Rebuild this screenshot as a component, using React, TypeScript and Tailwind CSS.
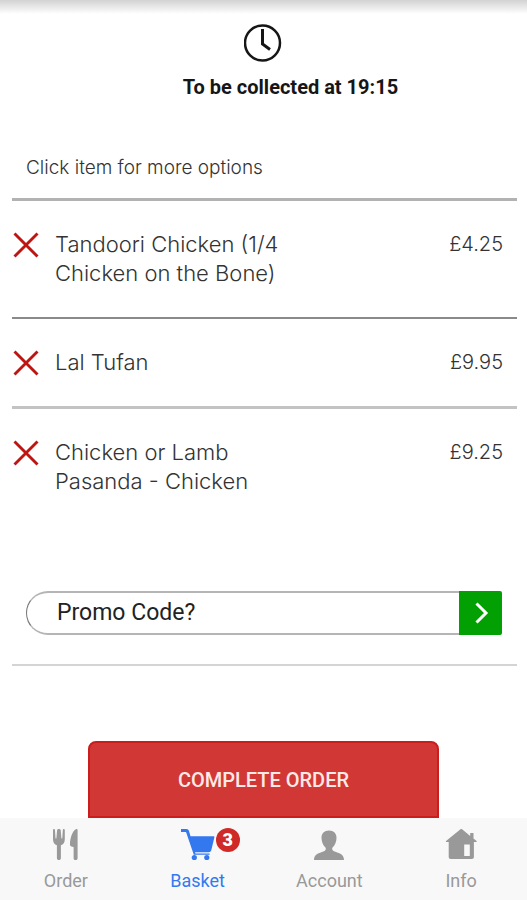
import type { ReactNode } from 'react';

const items = [
  { name: 'Tandoori Chicken (1/4 Chicken on the Bone)', price: '£4.25', divider: 'border-t-3 border-[#b2b2b2]' },
  { name: 'Lal Tufan', price: '£9.95', divider: 'border-t-2 border-[#8a8a8a]' },
  { name: 'Chicken or Lamb Pasanda - Chicken', price: '£9.25', divider: 'border-t-3 border-[#c3c3c3]' },
];

function ClockIcon() {
  return (
    <svg width="40" height="40" viewBox="0 0 40 40" fill="none" stroke="#161616" aria-hidden="true">
      <circle cx="18.500" cy="20" r="17.500" strokeWidth="2.500" />
      <path d="M18.500 6v15l7.500 5.500" strokeWidth="3" />
    </svg>
  );
}

function RemoveIcon() {
  return (
    <svg width="26" height="26" viewBox="0 0 26 26" fill="none" stroke="#bd1512" strokeWidth="2.9" aria-hidden="true">
      <path d="M1.500 1.500l23 23M24.500 1.500l-23 23" />
    </svg>
  );
}

function CutleryIcon() {
  return (
    <svg width="34" height="34" viewBox="0 0 34 34" fill="currentColor" aria-hidden="true">
      <path d="M4 2.200v9.100c0 3.500 1.500 5.200 3.900 6v12.600c0 1.400.9 2.200 2 2.200s2-.8 2-2.200V17.300c2.400-.8 3.900-2.500 3.900-6V2.200c0-1.500-1.900-1.500-2 0l-.5 7.800c-.1.700-.9.700-.9 0l-.7-7.800c-.2-1.500-3.400-1.500-3.600 0L7.400 10c-.1.700-.9.700-.9 0L6 2.200c-.1-1.500-2-1.500-2 0z" />
      <path d="M28.600 2.200v28c0 1.200-.9 1.900-2 1.900s-2-.7-2-1.900V18.900c-2.200 0-3.600-.6-3.600-2.400 0-5.300 1.800-12.900 5.900-15.200 1-.6 1.700-.1 1.700.9z" />
    </svg>
  );
}

function CartIcon() {
  return (
    <svg width="34" height="34" viewBox="0 0 34 34" fill="currentColor" aria-hidden="true">
      <path d="M0 1h5.300c1.600 0 2.300.7 2.700 2.100l1.500 5.200h23.300c.5 0 .7.400.6.900l-3 12.500c-.3 1.500-1.100 2.500-2.600 2.500H14l.4 1.200h14.200v1.300H12.800L5.200 4.500C5.100 4.100 4.900 4 4.500 4H0z" />
      <circle cx="13.300" cy="29.500" r="2.600" />
      <circle cx="25.800" cy="29.500" r="2.600" />
    </svg>
  );
}

function PersonIcon() {
  return (
    <svg width="34" height="34" viewBox="0 0 34 34" fill="currentColor" aria-hidden="true">
      <path d="M17 2.500c-4.700 0-7.800 3-7.500 7.800.1 3.500 1.500 7 3.700 8.900.6.600.8 1.400.5 2.300-.5 1.500-2.300 2-4.900 2.900C4.800 25.700 2 27.400 2 32h30c0-4.600-2.800-6.300-6.800-7.600-2.600-.9-4.400-1.400-4.900-2.900-.3-.9-.1-1.700.5-2.300 2.200-1.900 3.600-5.400 3.700-8.900.3-4.800-2.800-7.800-7.500-7.800z" />
    </svg>
  );
}

function HouseIcon() {
  return (
    <svg width="34" height="34" viewBox="0 0 34 34" fill="currentColor" aria-hidden="true">
      <path
        fillRule="evenodd"
        d="M16.500 1.300L2 13.100c-.3.300-.2.800.3.800h2.400v15c0 1.200.8 2 2 2h21.200c1.200 0 2-.8 2-2v-15h2.400c.5 0 .6-.5.3-.8l-3.100-2.500V5h-3.300v2.900l-8.100-6.600c-.6-.4-1.100-.4-1.600 0zM20.200 16.500h5.600V28h-5.600z"
      />
    </svg>
  );
}

function NavLink({ label, active, children }: { label: string; active?: boolean; children: ReactNode }) {
  return (
    <a
      href="#"
      aria-current={active ? 'page' : undefined}
      className={`flex flex-col items-center pt-2.5 text-lg leading-6 ${active ? 'text-[#3478f0]' : 'text-[#999]'}`}
    >
      <span className="relative">{children}</span>
      <span className="mt-[7px]">{label}</span>
    </a>
  );
}

function App() {
  return (
    <div className="flex min-h-screen flex-col bg-white font-['Roboto',sans-serif] text-black">
      <main className="flex flex-1 flex-col">
        {/* Collection time */}
        <header className="flex flex-col items-center bg-linear-to-b from-[#d2d2d2] to-white to-[14px] pt-[23px]">
          <ClockIcon />
          <h1 className="mt-3 pl-[54px] text-xl leading-6 font-bold text-[#161616]">To be collected at 19:15</h1>
        </header>

        {/* Basket items */}
        <section className="mt-[55px] pr-2.5 pl-3 font-['Inter',sans-serif] font-light text-[#333]">
          <p className="mb-4 pl-3.5 text-[19px] leading-7">Click item for more options</p>
          <ul>
            {items.map((item) => (
              <li key={item.name} className={`flex items-start py-[29px] pr-3.5 leading-[29px] ${item.divider}`}>
                <button type="button" aria-label={`Remove ${item.name}`} className="mr-[15px] flex h-[29px] w-7 items-center justify-center">
                  <RemoveIcon />
                </button>
                <a href="#" className="w-60 text-[22px] leading-[29px]">
                  {item.name}
                </a>
                <span className="ml-auto text-xl leading-[29px]">{item.price}</span>
              </li>
            ))}
          </ul>
        </section>

        {/* Promo code */}
        <form className="mr-2.5 ml-3 mt-[66px] border-b-2 border-[#d4d4d4] pr-[15px] pb-[29px] pl-3.5">
          <div className="flex h-11">
            <input
              type="text"
              aria-label="Promo Code"
              placeholder="Promo Code?"
              className="min-w-0 flex-1 rounded-l-full border-y-2 border-l border-y-[#b5b5b5] border-l-[#777] pl-[30px] text-[23px] text-[#222] outline-none placeholder:text-[#222]"
            />
            <button
              type="submit"
              aria-label="Apply promo code"
              className="flex w-[43px] items-center justify-center rounded-r-xs bg-[#03a003]"
            >
              <svg width="22" height="22" viewBox="0 0 22 22" fill="none" stroke="white" strokeWidth="3" aria-hidden="true">
                <path d="M6.500 1.500l9.500 9.500-9.500 9.500" />
              </svg>
            </button>
          </div>
        </form>

        <button
          type="button"
          className="mx-auto mt-[75px] h-[77px] w-2/3 rounded-t-lg border-2 border-[#ca1d1c] bg-[#d13835] text-xl font-medium text-[#ffe9e7]"
        >
          COMPLETE ORDER
        </button>
      </main>

      <nav className="grid h-[82px] grid-cols-4 bg-[#f8f8f8]">
        <NavLink label="Order">
          <CutleryIcon />
        </NavLink>
        <NavLink label="Basket" active>
          <CartIcon />
          <span className="absolute top-0 left-[35px] flex size-6 items-center justify-center rounded-full bg-[#cf2a27] text-lg font-black text-white">
            3
          </span>
        </NavLink>
        <NavLink label="Account">
          <PersonIcon />
        </NavLink>
        <NavLink label="Info">
          <HouseIcon />
        </NavLink>
      </nav>
    </div>
  );
}

export default App;
